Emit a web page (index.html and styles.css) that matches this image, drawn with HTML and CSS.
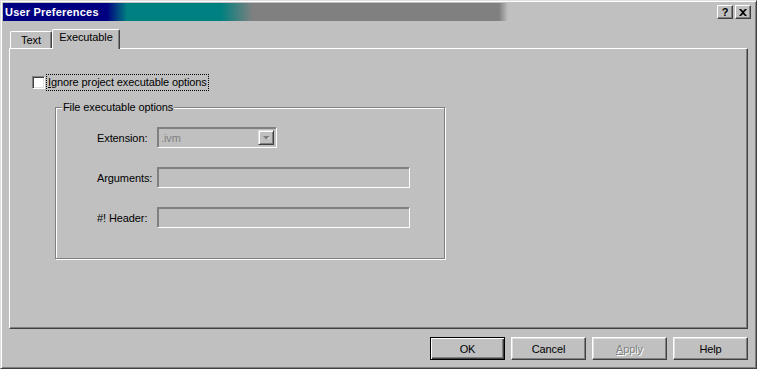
FILE: index.html
```html
<!DOCTYPE html>
<html lang="en">
<head>
  <meta charset="UTF-8" />
  <title>User Preferences</title>
  <link rel="stylesheet" href="styles.css">
</head>
<body>

<div class="window">
  <div class="titlebar">
    <span class="title">User Preferences</span>
    <div class="caption-buttons">
      <span class="cap-btn">?</span>
      <span class="cap-btn">
        <svg width="8" height="7" viewBox="0 0 8 7"><path d="M0 0h2l2 2 2-2h2L5 3.5 8 7H6L4 5 2 7H0l3-3.5z" fill="#000"/></svg>
      </span>
    </div>
  </div>

  <div class="client">
    <div class="tabs">
      <div class="tab">Text</div>
      <div class="tab active">Executable</div>
    </div>

    <div class="panel">
      <div class="check-row">
        <span class="checkbox"></span>
        <span class="focus"><u>I</u>gnore project executable options</span>
      </div>

      <fieldset class="group">
        <legend>File executable options</legend>
        <div class="rows">
          <div class="field">
            <span class="field-label">Extension:</span>
            <div class="combo">
              <span class="combo-text">.ivm</span>
              <span class="drop">
                <svg width="7" height="4" viewBox="0 0 7 4"><path d="M0 0h7L3.5 4z" fill="#808080"/><path d="M4 3.5L7 0.5" stroke="#fff" stroke-width="1"/></svg>
              </span>
            </div>
          </div>
          <div class="field">
            <span class="field-label">Arguments:</span>
            <div class="textbox"></div>
          </div>
          <div class="field">
            <span class="field-label">#! Header:</span>
            <div class="textbox"></div>
          </div>
        </div>
      </fieldset>
    </div>

    <div class="buttons">
      <div class="btn default">OK</div>
      <div class="btn">Cancel</div>
      <div class="btn disabled"><u>A</u>pply</div>
      <div class="btn">Help</div>
    </div>
  </div>
</div>

</body>
</html>
```

FILE: styles.css
```css
* { box-sizing: border-box; }
body {
  margin: 0;
  background-color: #c0c0c0;
  font-family: "Liberation Sans", Arial, sans-serif;
  font-size: 11px;
  letter-spacing: -0.1px;
  color: #000;
}
.window {
  width: 757px;
  height: 369px;
  display: flex;
  flex-direction: column;
  border: 1px solid;
  border-color: #dfdfdf #404040 #404040 #dfdfdf;
  box-shadow: inset 1px 1px #fff, inset -1px -1px #808080;
  padding: 2px;
}
.titlebar {
  height: 18px;
  display: flex;
  align-items: center;
  justify-content: space-between;
  padding: 0 3px 0 2px;
  background: linear-gradient(to right,
    #000080 0, #000080 104px,
    #008080 124px, #008080 218px,
    #808080 250px, #808080 496px,
    #c0c0c0 505px, #c0c0c0 100%);
}
.title {
  color: #fff;
  font-weight: bold;
  font-size: 11px;
  letter-spacing: 0.2px;
}
.caption-buttons {
  display: flex;
  gap: 2px;
}
.cap-btn {
  width: 16px;
  height: 14px;
  display: flex;
  align-items: center;
  justify-content: center;
  font-weight: bold;
  font-size: 11px;
  background: #c0c0c0;
  border: 1px solid;
  border-color: #fff #404040 #404040 #fff;
  box-shadow: inset -1px -1px #808080;
}
.client {
  flex: 1;
  display: flex;
  flex-direction: column;
  padding: 8px 6px 6px 6px;
}
.tabs {
  display: flex;
  align-items: flex-end;
  height: 19px;
  padding-left: 1px;
  position: relative;
  z-index: 1;
}
.tab {
  width: 42px;
  height: 17px;
  padding-top: 2px;
  text-align: center;
  border: 1px solid;
  border-bottom: none;
  border-color: #fff #404040 #404040 #fff;
  border-radius: 2px 2px 0 0;
  box-shadow: inset -1px 0 #808080;
  background: #c0c0c0;
}
.tab.active {
  width: 68px;
  height: 20px;
  padding-top: 1px;
  margin-bottom: -1px;
  position: relative;
}
.panel {
  flex: 1;
  border: 1px solid;
  border-color: #fff #404040 #404040 #fff;
  box-shadow: inset -1px -1px #808080;
  padding: 26px 22px 0 22px;
}
.check-row {
  display: flex;
  align-items: center;
  gap: 2px;
}
.checkbox {
  width: 13px;
  height: 13px;
  background: #fff;
  border: 1px solid;
  border-color: #808080 #fff #fff #808080;
  box-shadow: inset 1px 1px #404040, inset -1px -1px #dfdfdf;
}
.focus {
  outline: 1px dotted #000;
  padding: 1px;
  line-height: 13px;
}
.group {
  width: 390px;
  margin: 11px 0 0 23px;
  padding: 0;
  border: 1px solid #808080;
  box-shadow: inset 1px 1px #fff, 1px 1px #fff;
}
.group legend {
  margin-left: 6px;
  padding: 0 1px;
  background: #c0c0c0;
  line-height: 13px;
}
.rows {
  display: flex;
  flex-direction: column;
  gap: 19px;
  padding: 13px 0 30px 41px;
}
.field {
  display: flex;
  align-items: center;
}
.field-label {
  width: 60px;
}
.combo, .textbox {
  height: 21px;
  border: 1px solid;
  border-color: #808080 #fff #fff #808080;
  box-shadow: inset 1px 1px #808080;
  background: #c0c0c0;
}
.combo {
  width: 120px;
  display: flex;
  align-items: center;
  justify-content: space-between;
  padding: 0 2px 0 3px;
}
.combo-text {
  color: #808080;
}
.drop {
  width: 16px;
  height: 15px;
  display: flex;
  align-items: center;
  justify-content: center;
  border: 1px solid;
  border-color: #dfdfdf #404040 #404040 #dfdfdf;
  box-shadow: inset 1px 1px #fff, inset -1px -1px #808080;
}
.textbox {
  width: 253px;
}
.buttons {
  display: flex;
  justify-content: flex-end;
  gap: 6px;
  margin-top: 8px;
}
.btn {
  width: 75px;
  height: 23px;
  display: flex;
  align-items: center;
  justify-content: center;
  border: 1px solid;
  border-color: #fff #404040 #404040 #fff;
  box-shadow: inset -1px -1px #808080, inset 1px 1px #dfdfdf;
}
.btn.default {
  border: 1px solid #000;
  box-shadow: inset 1px 1px #fff, inset -1px -1px #404040, inset -2px -2px #808080;
}
.btn.disabled {
  color: #808080;
  text-shadow: 1px 1px #fff;
}
```
